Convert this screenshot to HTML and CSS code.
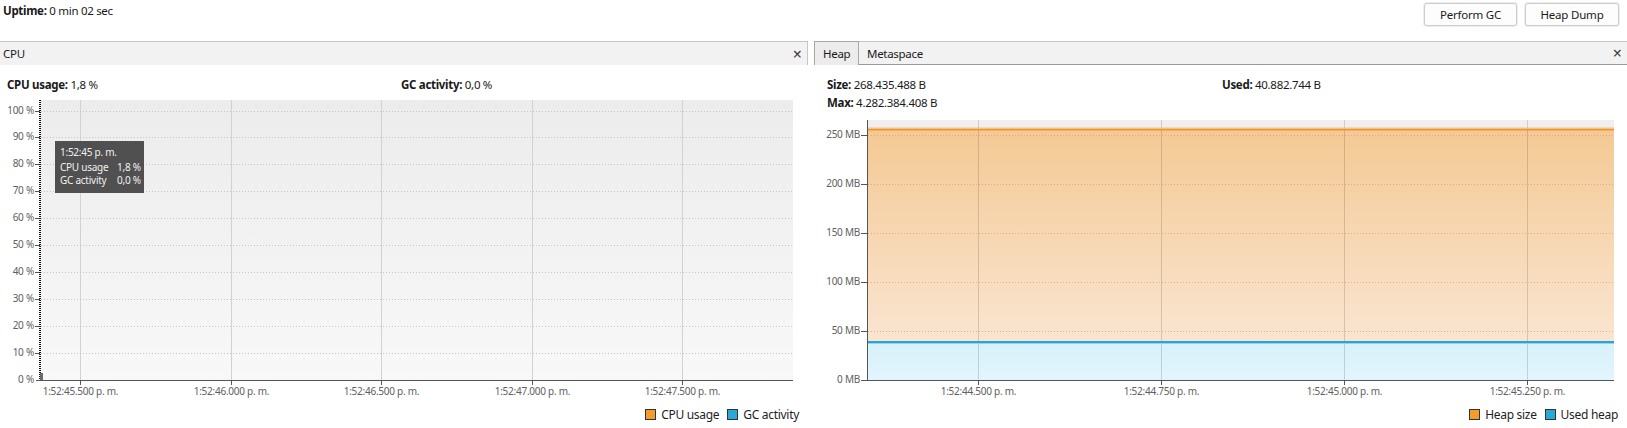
FILE: index.html
```html
<!DOCTYPE html>
<html>
<head>
<meta charset="utf-8">
<link rel="stylesheet" href="styles.css">
</head>
<body>
<div class="app">
  <div class="topbar">
    <div class="uptime"><b>Uptime:</b> 0 min 02 sec</div>
    <div class="actions">
      <button class="btn">Perform GC</button>
      <button class="btn">Heap Dump</button>
    </div>
  </div>
  <div class="panels">
    <section class="panel panel-cpu">
      <div class="ph ph-cpu">
        <span class="ph-title">CPU</span>
        <span class="close">×</span>
      </div>
      <div class="stats stats-cpu">
        <div class="stat"><b>CPU usage:</b> 1,8 %</div>
        <div class="stat"><b>GC activity:</b> 0,0 %</div>
      </div>
      <svg class="chart" width="808" height="305" viewBox="0 0 808 305">
        <defs>
          <linearGradient id="cpubg" x1="0" y1="0" x2="0" y2="1">
            <stop offset="0" stop-color="#ececec"/>
            <stop offset="1" stop-color="#f8f8f8"/>
          </linearGradient>
        </defs>
        <rect x="40" y="5" width="753" height="280" fill="url(#cpubg)"/>
        <g class="vgrid">
          <line x1="80.5" y1="5" x2="80.5" y2="285"/>
          <line x1="231.5" y1="5" x2="231.5" y2="285"/>
          <line x1="381.5" y1="5" x2="381.5" y2="285"/>
          <line x1="532.5" y1="5" x2="532.5" y2="285"/>
          <line x1="682.5" y1="5" x2="682.5" y2="285"/>
        </g>
        <g class="hgrid">
          <line x1="41" y1="258.5" x2="793" y2="258.5"/>
          <line x1="41" y1="231.5" x2="793" y2="231.5"/>
          <line x1="41" y1="204.5" x2="793" y2="204.5"/>
          <line x1="41" y1="177.5" x2="793" y2="177.5"/>
          <line x1="41" y1="150.5" x2="793" y2="150.5"/>
          <line x1="41" y1="123.5" x2="793" y2="123.5"/>
          <line x1="41" y1="96.5" x2="793" y2="96.5"/>
          <line x1="41" y1="69.5" x2="793" y2="69.5"/>
          <line x1="41" y1="42.5" x2="793" y2="42.5"/>
          <line x1="41" y1="16.5" x2="793" y2="16.5"/>
        </g>
        <g class="axis">
          <line x1="36" y1="285.5" x2="793" y2="285.5"/>
          <line x1="35" y1="258.5" x2="40" y2="258.5"/>
          <line x1="35" y1="231.5" x2="40" y2="231.5"/>
          <line x1="35" y1="204.5" x2="40" y2="204.5"/>
          <line x1="35" y1="177.5" x2="40" y2="177.5"/>
          <line x1="35" y1="150.5" x2="40" y2="150.5"/>
          <line x1="35" y1="123.5" x2="40" y2="123.5"/>
          <line x1="35" y1="96.5" x2="40" y2="96.5"/>
          <line x1="35" y1="69.5" x2="40" y2="69.5"/>
          <line x1="35" y1="42.5" x2="40" y2="42.5"/>
          <line x1="35" y1="16.5" x2="40" y2="16.5"/>
          <line x1="80.5" y1="285" x2="80.5" y2="290"/>
          <line x1="231.5" y1="285" x2="231.5" y2="290"/>
          <line x1="381.5" y1="285" x2="381.5" y2="290"/>
          <line x1="532.5" y1="285" x2="532.5" y2="290"/>
          <line x1="682.5" y1="285" x2="682.5" y2="290"/>
        </g>
        <line class="cpu-line" x1="40" y1="5" x2="40" y2="285"/>
        <rect x="40" y="278" width="3" height="7" fill="#6a6a6a"/>
        <g class="ylabels">
          <text x="34" y="285">0 %</text>
          <text x="34" y="258">10 %</text>
          <text x="34" y="231">20 %</text>
          <text x="34" y="204">30 %</text>
          <text x="34" y="177">40 %</text>
          <text x="34" y="150">50 %</text>
          <text x="34" y="123">60 %</text>
          <text x="34" y="96">70 %</text>
          <text x="34" y="69">80 %</text>
          <text x="34" y="42">90 %</text>
          <text x="34" y="16">100 %</text>
        </g>
        <g class="xlabels">
          <text x="80.5" y="297">1:52:45.500 p. m.</text>
          <text x="231.5" y="297">1:52:46.000 p. m.</text>
          <text x="381.5" y="297">1:52:46.500 p. m.</text>
          <text x="532.5" y="297">1:52:47.000 p. m.</text>
          <text x="682.5" y="297">1:52:47.500 p. m.</text>
        </g>
        <g class="tooltip">
          <rect x="55" y="46" width="89" height="52" fill="#505050"/>
          <text x="60" y="58">1:52:45 p. m.</text>
          <text x="60" y="73">CPU usage</text>
          <text x="117" y="73">1,8 %</text>
          <text x="60" y="86">GC activity</text>
          <text x="117" y="86">0,0 %</text>
        </g>
      </svg>
      <div class="legend">
        <span class="lg"><i class="sw sw-orange"></i>CPU usage</span>
        <span class="lg"><i class="sw sw-blue"></i>GC activity</span>
      </div>
    </section>

    <section class="panel panel-heap">
      <div class="ph ph-heap">
        <span class="tab tab-active">Heap</span>
        <span class="tab">Metaspace</span>
        <span class="spacer"></span>
        <span class="close">×</span>
      </div>
      <div class="stats stats-heap">
        <div class="stat"><b>Size:</b> 268.435.488 B</div>
        <div class="stat"><b>Used:</b> 40.882.744 B</div>
        <div class="stat"><b>Max:</b> 4.282.384.408 B</div>
      </div>
      <svg class="chart" width="813" height="288" viewBox="0 0 813 288">
        <defs>
          <linearGradient id="heapfill" x1="0" y1="0" x2="0" y2="1">
            <stop offset="0" stop-color="#f4c994"/>
            <stop offset="1" stop-color="#fbeadb"/>
          </linearGradient>
          <linearGradient id="usedfill" x1="0" y1="0" x2="0" y2="1">
            <stop offset="0" stop-color="#d8f1fb"/>
            <stop offset="1" stop-color="#e1f5fd"/>
          </linearGradient>
        </defs>
        <rect x="53" y="8" width="747" height="260" fill="#efefef"/>
        <rect x="53" y="17.5" width="747" height="250.5" fill="url(#heapfill)"/>
        <rect x="53" y="230" width="747" height="38" fill="url(#usedfill)"/>
        <g class="hgrid-heap">
          <line x1="54" y1="23.5" x2="800" y2="23.5"/>
          <line x1="54" y1="72.5" x2="800" y2="72.5"/>
          <line x1="54" y1="121.5" x2="800" y2="121.5"/>
          <line x1="54" y1="170.5" x2="800" y2="170.5"/>
          <line x1="54" y1="219.5" x2="800" y2="219.5"/>
        </g>
        <g class="vgrid-heap">
          <line x1="164.5" y1="8" x2="164.5" y2="268"/>
          <line x1="347.5" y1="8" x2="347.5" y2="268"/>
          <line x1="530.5" y1="8" x2="530.5" y2="268"/>
          <line x1="713.5" y1="8" x2="713.5" y2="268"/>
        </g>
        <line x1="53" y1="17.5" x2="800" y2="17.5" stroke="#f0962c" stroke-width="2"/>
        <line x1="53" y1="16" x2="800" y2="16" stroke="#f6c286" stroke-width="1"/>
        <line x1="53" y1="230" x2="800" y2="230" stroke="#27a5d6" stroke-width="2"/>
        <line x1="53" y1="231.5" x2="800" y2="231.5" stroke="#8fd3ee" stroke-width="1"/>
        <g class="axis">
          <line x1="53.5" y1="8" x2="53.5" y2="268"/>
          <line x1="53" y1="268.5" x2="800" y2="268.5"/>
          <line x1="47" y1="23.5" x2="53" y2="23.5"/>
          <line x1="47" y1="72.5" x2="53" y2="72.5"/>
          <line x1="47" y1="121.5" x2="53" y2="121.5"/>
          <line x1="47" y1="170.5" x2="53" y2="170.5"/>
          <line x1="47" y1="219.5" x2="53" y2="219.5"/>
          <line x1="47" y1="268.5" x2="53" y2="268.5"/>
          <line x1="164.5" y1="268" x2="164.5" y2="273"/>
          <line x1="347.5" y1="268" x2="347.5" y2="273"/>
          <line x1="530.5" y1="268" x2="530.5" y2="273"/>
          <line x1="713.5" y1="268" x2="713.5" y2="273"/>
        </g>
        <g class="ylabels">
          <text x="46" y="23.5">250 MB</text>
          <text x="46" y="72.5">200 MB</text>
          <text x="46" y="121.5">150 MB</text>
          <text x="46" y="170.5">100 MB</text>
          <text x="46" y="219.5">50 MB</text>
          <text x="46" y="268.5">0 MB</text>
        </g>
        <g class="xlabels">
          <text x="164.5" y="280">1:52:44.500 p. m.</text>
          <text x="347.5" y="280">1:52:44.750 p. m.</text>
          <text x="530.5" y="280">1:52:45.000 p. m.</text>
          <text x="713.5" y="280">1:52:45.250 p. m.</text>
        </g>
      </svg>
      <div class="legend">
        <span class="lg"><i class="sw sw-orange"></i>Heap size</span>
        <span class="lg"><i class="sw sw-blue"></i>Used heap</span>
      </div>
    </section>
  </div>
</div>
</body>
</html>
```

FILE: styles.css
```css
* { box-sizing: border-box; }
html, body {
  margin: 0;
  padding: 0;
  background: #ffffff;
}
body {
  font-family: "Noto Sans", "Open Sans", sans-serif;
  font-size: 11.5px;
  letter-spacing: -0.3px;
  color: #1a1a1a;
  width: 1627px;
  height: 428px;
  overflow: hidden;
}
b { font-weight: 700; }

.topbar {
  height: 41px;
  display: flex;
  justify-content: space-between;
  align-items: flex-start;
}
.uptime {
  padding: 2px 0 0 3px;
  line-height: 18px;
}
.actions {
  display: flex;
  gap: 8px;
  padding: 3px 8px 0 0;
}
.btn {
  font-family: inherit;
  font-size: 11.5px;
  letter-spacing: -0.2px;
  color: #1a1a1a;
  height: 23px;
  padding: 0;
  background: #fdfdfd;
  border: 1px solid #cdcdcd;
  border-radius: 3px;
  box-shadow: 0 0 0 1px #ededed;
}
.actions .btn:first-child { width: 93px; }
.actions .btn:last-child { width: 94px; }

.panels {
  display: flex;
  gap: 6px;
}
.panel {
  display: flex;
  flex-direction: column;
}
.panel-cpu { width: 808px; }
.panel-heap { width: 813px; }

.ph {
  height: 24px;
  background: #f2f2f2;
  border-top: 1px solid #c6c6c6;
  display: flex;
  align-items: center;
}
.ph-cpu {
  border-right: 1px solid #c6c6c6;
  justify-content: space-between;
  padding: 0 5px 0 3px;
}
.close {
  font-size: 16px;
  color: #3a3a3a;
  line-height: 1;
  letter-spacing: 0;
}
.ph-heap {
  align-items: stretch;
  border-bottom: 1px solid #9a9a9a;
  padding-right: 5px;
}
.ph-heap .close {
  align-self: center;
}
.tab {
  display: flex;
  align-items: center;
  padding: 0 8px;
}
.tab-active {
  background: #ececec;
  border: 1px solid #a8a8a8;
  border-bottom: none;
  margin-top: -1px;
  margin-bottom: -1px;
  width: 45px;
  padding: 0 0 0 8px;
}
.spacer { flex: 1; }

.stats {
  display: grid;
  line-height: 18px;
  padding-top: 11px;
}
.stats-cpu {
  height: 30px;
  grid-template-columns: 394px auto;
  padding-left: 7px;
}
.stats-heap {
  height: 47px;
  grid-template-columns: 395px auto;
  padding-left: 13px;
}

.chart {
  display: block;
  font-family: "Noto Sans", "Open Sans", sans-serif;
  letter-spacing: -0.25px;
}
.vgrid line { stroke: #d2d2d2; stroke-width: 1; }
.hgrid line { stroke: #c4c4c4; stroke-width: 1; stroke-dasharray: 1 2; }
.hgrid-heap line { stroke: #cfa57a; stroke-width: 1; stroke-dasharray: 1 2; opacity: 0.8; }
.vgrid-heap line { stroke: #000; stroke-opacity: 0.14; stroke-width: 1; }
.axis line { stroke: #555; stroke-width: 1; }
.cpu-line { stroke: #111; stroke-width: 2; stroke-dasharray: 1 1; }
.ylabels text {
  font-size: 10px;
  fill: #606060;
  text-anchor: end;
  dominant-baseline: middle;
}
.xlabels text {
  font-size: 10px;
  fill: #606060;
  text-anchor: middle;
  dominant-baseline: middle;
}
.tooltip text {
  font-size: 10px;
  fill: #f0f0f0;
  dominant-baseline: middle;
}

.legend {
  height: 28px;
  display: flex;
  justify-content: flex-end;
  align-items: center;
  gap: 8px;
  padding-right: 9px;
  font-size: 12px;
  letter-spacing: -0.3px;
  color: #1e1e1e;
}
.lg {
  display: flex;
  align-items: center;
  gap: 5px;
}
.sw {
  display: block;
  width: 11px;
  height: 11px;
  border: 1px solid #333;
}
.sw-orange { background: #f29c2b; }
.sw-blue { background: #2aa9d9; }
```
